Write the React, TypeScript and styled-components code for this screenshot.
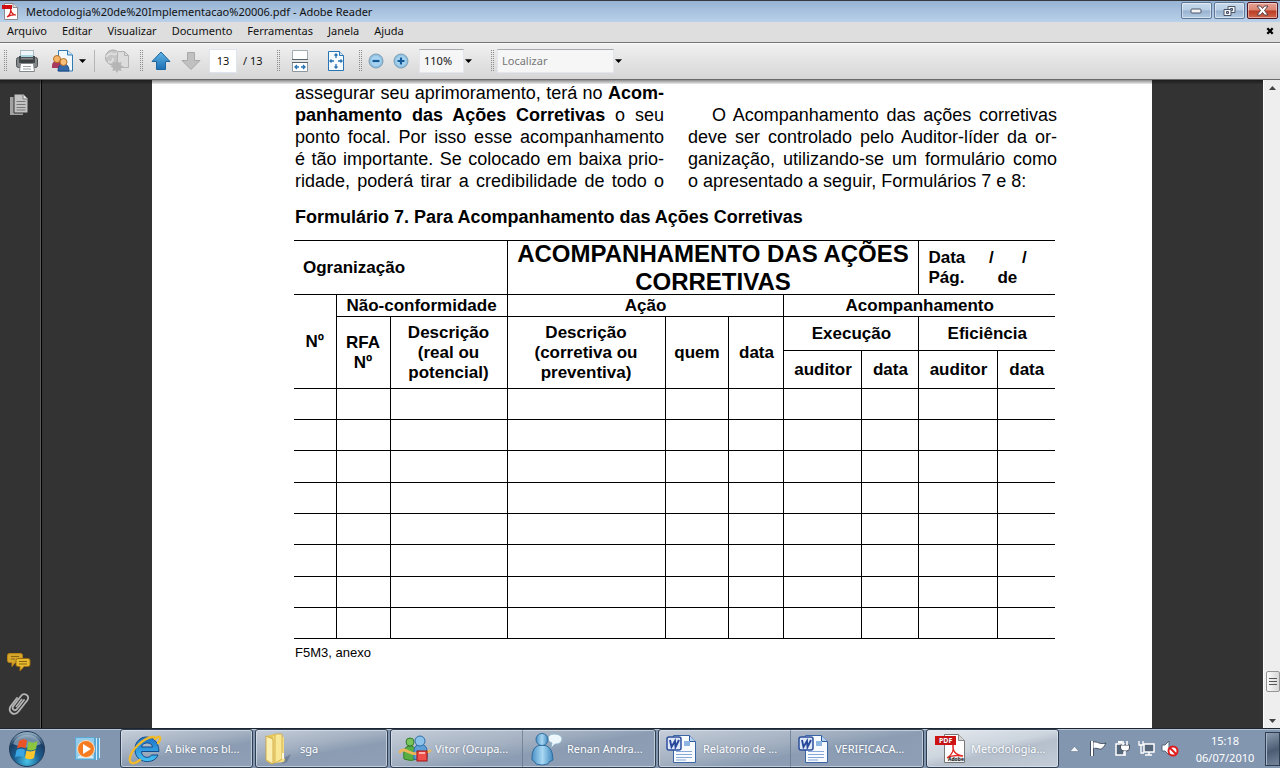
import React from 'react';
import styled, { createGlobalStyle } from 'styled-components';

const uiFont = '"Noto Sans", "Open Sans", sans-serif';
const docFont = '"Liberation Sans", Arial, sans-serif';

const GlobalStyle = createGlobalStyle`
  *, *::before, *::after { box-sizing: border-box; }
  body { margin: 0; font-family: ${uiFont}; font-size: 11px; color: #111; }
  button, input { font: inherit; color: inherit; }
  button { padding: 0; border: 0; background: none; }
  svg { display: block; flex: none; }
`;

const Desktop = styled.div`
  display: flex;
  flex-direction: column;
  height: 100vh;
  overflow: hidden;
`;

/* ---------- window frame ---------- */

const TitleBar = styled.header`
  display: flex;
  align-items: center;
  height: 22px;
  padding: 0 2px;
  border-top: 1px solid #38393f;
  background: linear-gradient(#97b3d3, #b9d1ea);
`;

const WindowTitle = styled.h1`
  flex: 1;
  margin: 0 0 0 8px;
  font-size: 11px;
  font-weight: 400;
  line-height: 20px;
  white-space: nowrap;
`;

const CaptionButtons = styled.div`
  display: flex;
  gap: 2px;
  align-self: flex-start;
  padding-top: 1px;
`;

const CaptionButton = styled.button<{ $danger?: boolean }>`
  display: grid;
  place-items: center;
  width: 31px;
  height: 17px;
  border: 1px solid ${p => (p.$danger ? '#4f1524' : '#5f7696')};
  border-radius: 2px;
  background: ${p =>
    p.$danger
      ? 'linear-gradient(#e6a193, #d98472 48%, #b93a22 52%, #d0664c)'
      : 'linear-gradient(#c8daec, #b7cde4 48%, #97b1cf 52%, #b4cce4)'};
  box-shadow: inset 0 0 0 1px rgba(255, 255, 255, 0.45);
`;

const MenuBar = styled.nav`
  display: flex;
  align-items: center;
  gap: 15px;
  height: 20px;
  padding: 0 6px 2px 7px;
  background: #dedede;
`;

const MenuItem = styled.button`
  line-height: 16px;
`;

const CloseDocument = styled.button`
  margin-left: auto;
`;

/* ---------- toolbar ---------- */

const Toolbar = styled.div`
  display: flex;
  align-items: center;
  height: 38px;
  padding-left: 3px;
  border-top: 1px solid #757575;
  border-bottom: 1px solid #6a6a6a;
  background: linear-gradient(#f1f1f1, #d6d6d6);
  box-shadow: inset 0 1px #fafafa;
`;

const Grip = styled.span<{ $before?: number }>`
  width: 4px;
  height: 22px;
  margin-left: ${p => p.$before ?? 0}px;
  background: conic-gradient(#8c8c8c 25%, transparent 0) 0 0 / 2px 2px;
`;

const ToolButton = styled.button<{ $width: number }>`
  display: grid;
  place-items: center;
  width: ${p => p.$width}px;
  height: 28px;
`;

const Caret = styled.button<{ $before?: number }>`
  width: 7px;
  height: 5px;
  margin-left: ${p => p.$before ?? 0}px;
  background: #000;
  clip-path: polygon(0 15%, 100% 15%, 50% 90%);
`;

const Divider = styled.span`
  width: 1px;
  height: 22px;
  margin: 0 9px 0 8px;
  background: #b5b5b5;
`;

const Field = styled.input<{ $width: number; $before: number }>`
  width: ${p => p.$width}px;
  height: 24px;
  margin-left: ${p => p.$before}px;
  padding: 0 4px 1px;
  border: 1px solid #e3e6ec;
  border-top-color: #a5a9ae;
  background: #f6f6f6;
  outline: 0;
  &::placeholder { color: #777; opacity: 1; }
`;

const PageField = styled(Field)`
  padding: 0 0 2px;
  border-color: #dfe4ee;
  background: #fff;
  text-align: center;
`;

const PageCount = styled.span`
  width: 25px;
  margin-left: 6px;
  padding-bottom: 2px;
  white-space: nowrap;
`;

/* ---------- reader area ---------- */

const Reader = styled.main`
  position: relative;
  display: flex;
  flex: 1;
  min-height: 0;
  background: #333;
  &::before {
    content: '';
    position: absolute;
    inset: 0 17px auto 0;
    height: 4px;
    background: linear-gradient(rgba(0, 0, 0, 0.45), rgba(0, 0, 0, 0.08));
  }
`;

const SidePanel = styled.aside`
  display: flex;
  flex-direction: column;
  align-items: center;
  gap: 20px;
  width: 42px;
  padding: 13px 4px 12px 0;
  border-right: 1px solid #000;
  box-shadow: inset -1px 0 #5a5a5a;
`;

const SideButton = styled.button<{ $push?: boolean }>`
  margin-top: ${p => (p.$push ? 'auto' : '0')};
`;

const Viewport = styled.div`
  display: flex;
  flex: 1;
  justify-content: center;
  min-width: 0;
  padding-right: 1px;
`;

const Page = styled.article`
  flex: 0 1 1000px;
  padding: 2px 95px 0 142px;
  overflow: hidden;
  background: #fff;
  color: #000;
  font-family: ${docFont};
`;

const Columns = styled.div`
  display: grid;
  grid-template-columns: 1fr 1fr;
  gap: 24px;
  padding-left: 1px;
`;

const Paragraph = styled.p<{ $skipLine?: boolean }>`
  margin: ${p => (p.$skipLine ? '22px' : '0')} 0 0;
  font-size: 18px;
  line-height: 22px;
`;

const Line = styled.span<{ $indent?: boolean; $last?: boolean }>`
  display: block;
  padding-left: ${p => (p.$indent ? '24px' : '0')};
  text-align: justify;
  text-align-last: ${p => (p.$last ? 'left' : 'justify')};
  white-space: nowrap;
`;

const FormHeading = styled.h2`
  margin: 14px 0 12px 1px;
  font-size: 18px;
  line-height: 22px;
`;

const FormTable = styled.table`
  width: calc(100% - 2px);
  border-collapse: collapse;
  table-layout: fixed;
  font-size: 17px;
  font-weight: 700;
  line-height: 20px;
  tr > * { border: 1px solid #000; padding: 0; }
  tr > :first-child:not([data-inner]) { border-left: 0; }
  tr > [data-edge] { border-right: 0; }
  tbody td { height: 31px; }
  tbody tr:nth-child(3n) td { height: 32px; }
`;

const HeadCell = styled.th<{ $height?: number }>`
  height: ${p => (p.$height ? `${p.$height}px` : 'auto')};
`;

const LeftCell = styled(HeadCell)`
  && { padding-left: 9px; }
  text-align: left;
  white-space: pre;
`;

const FormTitle = styled.div`
  margin: -1px 0 -2px;
  font-size: 24px;
  line-height: 28px;
`;

const Footnote = styled.p`
  margin: 6px 0 0 1px;
  font-size: 13px;
  line-height: 16px;
`;

/* ---------- scroll bar ---------- */

const ScrollBar = styled.div`
  display: flex;
  flex-direction: column;
  align-items: center;
  width: 17px;
  padding: 6px 0 5px 1px;
  border-left: 1px solid #fff;
  background: #eee;
`;

const ScrollArrow = styled.button<{ $down?: boolean }>`
  width: 7px;
  height: 4px;
  background: #444;
  clip-path: ${p => (p.$down ? 'polygon(0 0, 100% 0, 50% 100%)' : 'polygon(50% 0, 100% 100%, 0 100%)')};
`;

const ScrollThumb = styled.button`
  display: grid;
  place-items: center;
  width: 14px;
  height: 21px;
  margin: auto 0 27px;
  border: 1px solid #959595;
  border-radius: 2px;
  background: linear-gradient(90deg, #fafafa, #d8d8d8);
`;

/* ---------- task bar ---------- */

const TaskBar = styled.footer`
  display: flex;
  align-items: center;
  height: 40px;
  border-top: 1px solid #1c2530;
  background: #8296b0;
  box-shadow: inset 0 1px #b6c3d3;
  color: #fff;
`;

const StartButton = styled.button`
  margin: 0 29px 0 8px;
`;

const PlayerButton = styled.button`
  width: 30px;
  margin-right: 15px;
`;

const TaskList = styled.div`
  display: flex;
  gap: 2px;
  align-self: stretch;
`;

const TaskGroup = styled.div<{ $active?: boolean }>`
  display: flex;
  border: 1px solid #2f3d50;
  border-radius: 3px;
  background: ${p =>
    p.$active
      ? 'linear-gradient(168deg, #e6eaef 0, #ccd4dd 45%, #b6c0cd 58%, #c3ccd8)'
      : 'linear-gradient(170deg, #c6ced9 0, #a3b0c1 40%, #8c9db3 58%, #8fa0b6)'};
  box-shadow: inset 0 0 0 1px rgba(225, 233, 243, 0.6);
`;

const TaskButton = styled.button`
  display: grid;
  grid-template-columns: 35px 1fr;
  align-items: center;
  gap: 2px;
  width: 131px;
  padding: 0 6px 0 7px;
  text-align: left;
  white-space: nowrap;
  text-shadow: 0 0 2px rgba(50, 65, 90, 0.5);
  & + & {
    width: 133px;
    border-left: 1px solid rgba(90, 108, 132, 0.6);
  }
`;

const Tray = styled.div`
  display: flex;
  align-items: center;
  gap: 6px;
  margin-left: auto;
`;

const TrayButton = styled.button<{ $narrow?: boolean }>`
  display: grid;
  place-items: center;
  width: ${p => (p.$narrow ? '10px' : '18px')};
  margin-right: ${p => (p.$narrow ? '4px' : '0')};
`;

const Clock = styled.time`
  width: 68px;
  margin-left: 6px;
  line-height: 17px;
  text-align: center;
`;

const ShowDesktop = styled.button`
  align-self: stretch;
  width: 15px;
  border: 1px solid #2f3d50;
  background: linear-gradient(160deg, #8b9bb0, #4c5c72 55%, #76879d);
  box-shadow: inset 1px 0 #a5b4c6;
`;

/* ---------- icons ---------- */

const PdfAppIcon = () => (
  <svg width="16" height="17" viewBox="0 0 16 17">
    <path d="M2.500 .5h8.500l4.500 4v12h-13z" fill="#fff" stroke="#8b8b8b" />
    <path d="M11 .5v4h4.500" fill="#ddd" stroke="#8b8b8b" />
    <rect x="0" y="2" width="10" height="4" fill="#d10f12" />
    <path d="M5 14c3-2 4-5 3.600-8 .2 4 3 6 5.400 6-3-.6-6 0-9 2z" fill="none" stroke="#d8201c" strokeWidth="1.200" />
  </svg>
);

const MinimizeIcon = () => (
  <svg width="13" height="7"><rect x="1" y="2" width="10" height="4" rx="1" fill="#f4f4f4" stroke="#4a5468" /></svg>
);
const RestoreIcon = () => (
  <svg width="13" height="12" viewBox="0 0 13 12">
    <path d="M5 1.500h7v6H5z" fill="#f4f4f4" stroke="#4a5468" />
    <path d="M7.500 3.500h2v2h-2z" fill="#9db4cf" stroke="#4a5468" />
    <path d="M1 4.500h7v6H1z" fill="#f4f4f4" stroke="#4a5468" />
    <path d="M3.500 6.500h2v2h-2z" fill="#9db4cf" stroke="#4a5468" />
  </svg>
);
const CloseIcon = () => (
  <svg width="13" height="11" viewBox="0 0 13 11">
    <path d="M1 1h3.500l2 2.500 2-2.500H12L8.500 5.500 12 10H8.500l-2-2.500-2 2.500H1l3.500-4.500z" fill="#fff" stroke="#5a4048" />
  </svg>
);
const SmallCross = () => (
  <svg width="8" height="8" viewBox="0 0 8 8"><path d="M1.300 1.300l5.400 5.400M6.700 1.300L1.300 6.700" stroke="#000" strokeWidth="2.300" /></svg>
);

const PrinterIcon = () => (
  <svg width="22" height="24" viewBox="0 0 22 24">
    <rect x="4.500" y="1.500" width="13" height="8" fill="#eef6fa" stroke="#a9bac2" />
    <path d="M5 7h12" stroke="#a9d5e0" strokeWidth="2" />
    <rect x=".5" y="8.500" width="21" height="10" rx="2" fill="#85898c" stroke="#4d5154" />
    <path d="M4 7v6h14V7" fill="none" stroke="#45494c" strokeWidth="2" />
    <path d="M5 12h12" stroke="#3a3e41" strokeWidth="3" />
    <path d="M4.500 14.500h13l1 8h-15z" fill="#fff" stroke="#84898c" />
    <path d="M7 17.500h8M7 20h8" stroke="#9aa3a8" />
  </svg>
);

const PeopleIcon = () => (
  <svg width="24" height="24" viewBox="0 0 24 24">
    <path d="M7.500 1.500h9l5 4.500v16h-14z" fill="#f1f8fd" stroke="#2f7ab3" />
    <path d="M16.500 1.500V6h5" fill="#cfe4f3" stroke="#2f7ab3" />
    <path d="M1 17q0-5 5-5t5 5v2H1z" fill="#a83a5f" />
    <circle cx="6" cy="10" r="3.500" fill="#f4b56a" stroke="#b86f22" />
    <path d="M7 22q0-7 5.500-7t5.500 7z" fill="#3569a8" stroke="#214d84" />
    <circle cx="12.500" cy="13" r="3.500" fill="#f8c07a" stroke="#b86f22" />
  </svg>
);

const GlobeIcon = () => (
  <svg width="26" height="24" viewBox="0 0 26 24">
    <circle cx="9" cy="8.500" r="7.500" fill="#c6c6c6" stroke="#a9a9a9" />
    <path d="M2 8q4-5 7-3t5-3M4 13q5 1 5-4" fill="none" stroke="#dedede" strokeWidth="2" />
    <path d="M13.500 2.500h7l4 4v12h-11z" fill="#dcdcdc" stroke="#b3b3b3" />
    <path d="M20.500 2.500v4h4" fill="none" stroke="#b3b3b3" />
    <path d="M13 11l1.600 2.700 3-.8-.8 3 2.700 1.600-2.700 1.600.8 3-3-.8L13 24l-1.600-2.700-3 .8.800-3-2.700-1.600 2.700-1.600-.8-3 3 .8z" fill="#b5b5b5" />
  </svg>
);

const ArrowIcon = ({ down }: { down?: boolean }) => (
  <svg width="20" height="20" viewBox="0 0 20 20">
    <defs>
      <linearGradient id="arrowBlue" x2="0" y2="1"><stop stopColor="#62b4e6" /><stop offset="1" stopColor="#1c70b4" /></linearGradient>
    </defs>
    {down
      ? <path d="M10 18.500L1 9.500h5.500v-8h7v8H19z" fill="#c0c0c0" stroke="#a9a9a9" />
      : <path d="M10 1L1 10.500h4.500v8h9v-8H19z" fill="url(#arrowBlue)" stroke="#1d659f" />}
  </svg>
);

const FitWidthIcon = () => (
  <svg width="18" height="22" viewBox="0 0 18 22">
    <path d="M1.500 .5h15v9h-15z" fill="#fff" stroke="#a3adb4" />
    <path d="M1.500 12.500h15v9h-15z" fill="#fff" stroke="#8c979f" />
    <path d="M1 9.500h16M1 12.500h16" stroke="#57646d" />
    <path d="M4 17h4M10 17h4M6 15l-2 2 2 2M12 15l2 2-2 2" fill="none" stroke="#2775b4" strokeWidth="1.300" />
  </svg>
);

const FitPageIcon = () => (
  <svg width="18" height="22" viewBox="0 0 18 22">
    <path d="M1.500 1.500h11l4 4v15h-15z" fill="#f5fafd" stroke="#2775b4" />
    <path d="M12.500 1.500v4h4" fill="#d3e6f3" stroke="#2775b4" />
    <path d="M9 4v4M9 14v4M3 11h4M11 11h4M7.500 5.500L9 4l1.500 1.500M7.500 16.500L9 18l1.500-1.500M4.500 9.500L3 11l1.500 1.500M13.500 9.500L15 11l-1.500 1.500" fill="none" stroke="#2775b4" strokeWidth="1.300" />
  </svg>
);

const ZoomIcon = ({ plus }: { plus?: boolean }) => (
  <svg width="16" height="16" viewBox="0 0 16 16">
    <circle cx="8" cy="8" r="7" fill="#8fc3e6" stroke="#7f9cb0" />
    <circle cx="8" cy="8" r="5" fill="#a9d4ef" />
    <path d={plus ? 'M4.500 8h7M8 4.500v7' : 'M4.500 8h7'} stroke="#155a99" strokeWidth="2.200" />
  </svg>
);

const PagesIcon = () => (
  <svg width="20" height="24" viewBox="0 0 20 24">
    <path d="M1 4h13v18H1z" fill="#a2a2a2" />
    <path d="M5 1h9l5 5v14H5z" fill="#c3c3c3" stroke="#333" />
    <path d="M14 1v5h5" fill="#e6e6e6" stroke="#777" />
    <path d="M7.500 8.500h9M7.500 11.500h9M7.500 14.500h9M7.500 17h9" stroke="#777" />
  </svg>
);

const CommentsIcon = () => (
  <svg width="24" height="19" viewBox="0 0 24 19">
    <path d="M2.500.5h11q2 0 2 2v5q0 2-2 2H8l-3 4V9.500H2.500q-2 0-2-2v-5q0-2 2-2z" fill="#d4a72c" stroke="#b98413" />
    <path d="M11 5.500h10q2 0 2 2v4q0 2-2 2h-4l-4 4.500v-4.500h-2q-2 0-2-2v-4q0-2 2-2z" fill="#e7bb31" stroke="#9c6d0c" />
    <path d="M4 3.500h8M4 6h4M12 8.500h8M12 11h8" stroke="#8a6410" />
  </svg>
);

const ClipIcon = () => (
  <svg width="22" height="24" viewBox="0 0 22 24">
    <path d="M16 8l-7 9c-2 2.500-5.500.5-4-2.500L13 4c3-4 9-.5 6.500 4l-9 11.500c-4 5-11 1-8-5L9 6" fill="none" stroke="#b4b4b4" strokeWidth="1.800" strokeLinecap="round" />
    <path d="M8 15l6-8" stroke="#b4b4b4" strokeWidth="1.500" />
  </svg>
);

const StartOrb = () => (
  <svg width="38" height="38" viewBox="0 0 38 38">
    <defs>
      <radialGradient id="orb" cx=".5" cy=".85" r=".8">
        <stop stopColor="#49c4e8" /><stop offset=".45" stopColor="#1b5f92" /><stop offset=".8" stopColor="#1b3d63" /><stop offset="1" stopColor="#8fa9bf" />
      </radialGradient>
    </defs>
    <circle cx="19" cy="19" r="17.500" fill="url(#orb)" stroke="#203b57" />
    <path d="M5 14a15 15 0 0 1 28 0q-14 7-28 0z" fill="#c8dbe8" opacity=".5" />
    <path d="M11 11q4-3 8-.5l-1.500 8q-4-2.500-8.500 0z" fill="#ea5426" />
    <path d="M20.500 11.500q4 2.500 9-.5l-1.500 8q-4 2.500-9 .5z" fill="#8cc63f" />
    <path d="M8.500 20q4.500-2.500 8.500 0l-1.500 7.500q-4-2.500-8.500 0z" fill="#39a5e3" />
    <path d="M18.500 20.500q4.500 2 9-.5l-1.500 8q-4.500 2.500-9 0z" fill="#fcc62d" />
  </svg>
);

const PlayerIcon = () => (
  <svg width="30" height="26" viewBox="0 0 30 26">
    <path d="M11 2h14v20l-3 2H11z" fill="#5ba7d6" />
    <path d="M21.500 2v22M24.500 2v20" stroke="#d0edfb" />
    <rect x=".5" y="1.500" width="19" height="22" fill="#92cdeb" stroke="#5fa7d0" />
    <path d="M3 21h15" stroke="#d3effc" strokeWidth="2" />
    <circle cx="11" cy="13" r="8.500" fill="#f47b20" stroke="#fbe0c4" />
    <path d="M8 8l8 5-8 5z" fill="#fff" />
  </svg>
);

const ExplorerIcon = () => (
  <svg width="34" height="32" viewBox="0 0 34 32">
    <defs><linearGradient id="ie" x2="0" y2="1"><stop stopColor="#1b70c8" /><stop offset="1" stopColor="#46c3f4" /></linearGradient></defs>
    <path d="M31 18.500H13.500c0 6.500 8 7.500 10 3.500h6.500c-3 9.500-23 9.500-23-5.500 0-17 24-17 24 2zM13.500 14h11c-.5-5.500-10-5.500-11 0z" fill="url(#ie)" stroke="#124c8c" />
    <path d="M27 6c5-5 7-1 3 4M26 4C17 3 0 19 2 28c1 4 6 2 10-1" fill="none" stroke="#f0b92c" strokeWidth="2.400" strokeLinecap="round" />
  </svg>
);

const FolderIcon = () => (
  <svg width="30" height="32" viewBox="0 0 30 32">
    <path d="M21 25l7-4-4 8-5 2z" fill="#556479" opacity=".5" />
    <path d="M3 3l8-2 9 3v24l-12 3-5-3z" fill="#e8c758" />
    <path d="M10 3l11 1v18q-2 2 1 4l-1 3-11 1z" fill="#f3dd83" />
    <path d="M3 3l7 3v25l-7-4z" fill="#faeeb0" stroke="#c9a034" strokeWidth=".8" />
    <path d="M12 1h7v25l-7 4z" fill="#f8e795" stroke="#cfa93f" strokeWidth=".8" />
    <path d="M20 20v6" stroke="#fff8d8" strokeWidth="2" />
  </svg>
);

const MessengerIcon = () => (
  <svg width="34" height="28" viewBox="0 0 34 28">
    <path d="M6 24q-2-13 6-13t7 13q-6 3-13 0z" fill="#58ad43" stroke="#357f2a" />
    <circle cx="12" cy="7" r="4" fill="#79c45c" stroke="#357f2a" />
    <path d="M16 24q-2-15 6.500-15t6.500 15q-6 3-13 0z" fill="#5d9fd6" stroke="#2f6ea8" />
    <circle cx="22" cy="6" r="5" fill="#8cc2ea" stroke="#2f6ea8" />
    <path d="M2 17q2-4 9 0t21-1" fill="none" stroke="#eeb65a" strokeWidth="2.800" strokeLinecap="round" />
    <rect x="19" y="16" width="10" height="10" fill="#ef4f4b" stroke="#a31313" />
    <path d="M21 18h6" stroke="#ffb3ae" strokeWidth="2" />
  </svg>
);

const ContactIcon = () => (
  <svg width="34" height="34" viewBox="0 0 34 34">
    <defs><linearGradient id="body"><stop stopColor="#4d92c6" /><stop offset=".5" stopColor="#a8d8f3" /><stop offset="1" stopColor="#3f86bd" /></linearGradient></defs>
    <path d="M24 2c12 0 9 11 1 10l-4 4 1-5c-6-2-5-9 2-9z" fill="#eef7fc" stroke="#8fb6cc" />
    <path d="M2 28Q1 13 12 13t11 15l-4 2-1 2q-6 2-12 0l-1-2z" fill="url(#body)" stroke="#2f6ea1" />
    <circle cx="12" cy="7.500" r="6" fill="url(#body)" stroke="#2f6ea1" />
  </svg>
);

const WordIcon = () => (
  <svg width="32" height="30" viewBox="0 0 32 30">
    <path d="M7.500 1.500h16l6 6v21h-22z" fill="#f7faff" stroke="#3a66a8" />
    <path d="M23.500 1.500v6h6" fill="#b9d2ef" stroke="#2d5c9d" />
    <path d="M18 7h6v5h-6z" fill="#8fb5e2" />
    <path d="M10 17.500h16M10 20.500h16M10 23.500h16M10 26h10" stroke="#86a8d6" />
    <rect x="1" y="3" width="14" height="13" rx="2" fill="#dfe8f8" stroke="#2d4f9c" strokeWidth="1.500" />
    <path d="M4 6l1.500 7L9 7l.5 6L13 6" fill="none" stroke="#27479a" strokeWidth="1.900" />
  </svg>
);

const PdfBadge = styled.text`
  fill: #fff;
  font: 700 7px ${uiFont};
`;
const AdobeMark = styled.text`
  fill: #222;
  font: 700 5px ${uiFont};
`;
const PdfTaskIcon = () => (
  <svg width="33" height="31" viewBox="0 0 33 31">
    <path d="M10.500 1.500h14l6 6v22h-20z" fill="#fff" stroke="#777" />
    <path d="M24.500 1.500v6h6" fill="#d5d5d5" stroke="#888" />
    <path d="M13 25c6-4 7-8 6-14-1 8 3 11 10 12-6-1-11-1-16 2z" fill="none" stroke="#e32a25" strokeWidth="1.300" />
    <rect x="1" y="3" width="21" height="9" fill="#cf1214" />
    <PdfBadge x="5" y="10">PDF</PdfBadge>
    <AdobeMark x="14" y="28">Adobe</AdobeMark>
  </svg>
);

const trayStroke = { fill: 'none', stroke: '#fff', strokeWidth: 1.3 };
const UpTriangle = () => <svg width="9" height="6"><path d="M4.500 .5L9 5.500H0z" fill="#f5f8fb" stroke="#44566d" strokeWidth=".4" /></svg>;
const FlagIcon = () => (
  <svg width="17" height="17" viewBox="0 0 17 17">
    <path d="M2 1v15" stroke="#44505f" strokeWidth="4" />
    <path d="M3 2c5-1 6 3 13 1-2 4-4 7-7 6S5 8 3 9z" fill="#fff" stroke="#44505f" />
    <path d="M2 1v15" stroke="#fff" strokeWidth="2" />
  </svg>
);
const PowerIcon = () => (
  <svg width="17" height="17" viewBox="0 0 17 17">
    <rect x="2" y="4" width="8" height="11" fill="#56667b" stroke="#fff" strokeWidth="1.500" />
    <path d="M4 2h4" stroke="#fff" strokeWidth="2" />
    <path d="M6.500 5h9v3q0 3-3 3H10q-3 0-3.500-3z" fill="#fff" stroke="#44505f" />
    <path d="M9 1v4M13 1v4M11 11v5" stroke="#fff" strokeWidth="1.600" />
  </svg>
);
const NetworkIcon = () => (
  <svg width="17" height="17" viewBox="0 0 17 17">
    <rect x="6" y="4" width="10" height="8" fill="#56667b" stroke="#fff" strokeWidth="1.500" />
    <path d="M7 15h7M11 12v3" stroke="#fff" strokeWidth="1.600" />
    <path d="M1 1v4h4V1M3 5v8h3" {...trayStroke} />
  </svg>
);
const MutedIcon = () => (
  <svg width="18" height="17" viewBox="0 0 18 17">
    <path d="M1 5h3l4-4v14l-4-4H1z" fill="#fff" stroke="#56667b" />
    <circle cx="12" cy="11" r="4.500" fill="#fff" stroke="#e01b1b" strokeWidth="2" />
    <path d="M9 8l6 6" stroke="#e01b1b" strokeWidth="2" />
  </svg>
);

/* ---------- data ---------- */

const menus = ['Arquivo', 'Editar', 'Visualizar', 'Documento', 'Ferramentas', 'Janela', 'Ajuda'];
const columnWidths = [42, 54, 117, 158, 64, 55, 78, 57, 79, 57];
const tableWidth = 761;

const taskGroups: { active?: boolean; items: { label: string; icon: React.ReactNode }[] }[] = [
  { items: [{ label: 'A bike nos bl...', icon: <ExplorerIcon /> }] },
  { items: [{ label: 'sga', icon: <FolderIcon /> }] },
  { items: [{ label: 'Vitor (Ocupa...', icon: <MessengerIcon /> }, { label: 'Renan Andra...', icon: <ContactIcon /> }] },
  { items: [{ label: 'Relatorio de ...', icon: <WordIcon /> }, { label: 'VERIFICACA...', icon: <WordIcon /> }] },
  { active: true, items: [{ label: 'Metodologia...', icon: <PdfTaskIcon /> }] },
];

const CorrectiveActionsForm = () => (
  <FormTable>
    <colgroup>
      {columnWidths.map((w, i) => <col key={i} style={{ width: `${(w / tableWidth) * 100}%` }} />)}
    </colgroup>
    <thead>
      <tr>
        <LeftCell colSpan={3} $height={54}>Ogranização</LeftCell>
        <HeadCell colSpan={5}><FormTitle>ACOMPANHAMENTO DAS AÇÕES<br />CORRETIVAS</FormTitle></HeadCell>
        <LeftCell colSpan={2} data-edge>{'Data     /      /\nPág.       de'}</LeftCell>
      </tr>
      <tr>
        <HeadCell rowSpan={3} $height={22}>Nº</HeadCell>
        <HeadCell colSpan={2} $height={22}>Não-conformidade</HeadCell>
        <HeadCell colSpan={3}>Ação</HeadCell>
        <HeadCell colSpan={4} data-edge>Acompanhamento</HeadCell>
      </tr>
      <tr>
        <HeadCell rowSpan={2} data-inner>RFA<br />Nº</HeadCell>
        <HeadCell rowSpan={2}>Descrição<br />(real ou<br />potencial)</HeadCell>
        <HeadCell rowSpan={2}>Descrição<br />(corretiva ou<br />preventiva)</HeadCell>
        <HeadCell rowSpan={2}>quem</HeadCell>
        <HeadCell rowSpan={2}>data</HeadCell>
        <HeadCell colSpan={2} $height={34}>Execução</HeadCell>
        <HeadCell colSpan={2} data-edge>Eficiência</HeadCell>
      </tr>
      <tr>
        <HeadCell data-inner $height={38}>auditor</HeadCell>
        <HeadCell>data</HeadCell>
        <HeadCell>auditor</HeadCell>
        <HeadCell data-edge>data</HeadCell>
      </tr>
    </thead>
    <tbody>
      {Array.from({ length: 8 }, (_, row) => (
        <tr key={row}>
          {columnWidths.map((_, i) => <td key={i} data-edge={i === columnWidths.length - 1 ? true : undefined} />)}
        </tr>
      ))}
    </tbody>
  </FormTable>
);

export default function App() {
  return (
    <Desktop>
      <GlobalStyle />
      <TitleBar>
        <PdfAppIcon />
        <WindowTitle>Metodologia%20de%20Implementacao%20006.pdf - Adobe Reader</WindowTitle>
        <CaptionButtons>
          <CaptionButton aria-label="Minimizar"><MinimizeIcon /></CaptionButton>
          <CaptionButton aria-label="Restaurar"><RestoreIcon /></CaptionButton>
          <CaptionButton aria-label="Fechar" $danger><CloseIcon /></CaptionButton>
        </CaptionButtons>
      </TitleBar>
      <MenuBar>
        {menus.map(m => <MenuItem key={m}>{m}</MenuItem>)}
        <CloseDocument aria-label="Fechar documento"><SmallCross /></CloseDocument>
      </MenuBar>
      <Toolbar role="toolbar">
        <Grip />
        <ToolButton $width={40} aria-label="Imprimir"><PrinterIcon /></ToolButton>
        <ToolButton $width={32} aria-label="Colaborar"><PeopleIcon /></ToolButton>
        <Caret aria-label="Opções de colaboração" />
        <Divider />
        <ToolButton $width={26} aria-label="Publicar"><GlobeIcon /></ToolButton>
        <Grip $before={9} />
        <ToolButton $width={36} aria-label="Página anterior"><ArrowIcon /></ToolButton>
        <ToolButton $width={24} aria-label="Próxima página"><ArrowIcon down /></ToolButton>
        <PageField $width={28} $before={6} aria-label="Página" defaultValue="13" />
        <PageCount>/ 13</PageCount>
        <Grip $before={8} />
        <ToolButton $width={40} aria-label="Ajustar largura"><FitWidthIcon /></ToolButton>
        <ToolButton $width={32} aria-label="Ajustar página"><FitPageIcon /></ToolButton>
        <Grip $before={6} />
        <ToolButton $width={28} aria-label="Reduzir"><ZoomIcon /></ToolButton>
        <ToolButton $width={22} aria-label="Ampliar"><ZoomIcon plus /></ToolButton>
        <Field $width={45} $before={7} aria-label="Zoom" defaultValue="110%" />
        <Caret $before={1} aria-label="Opções de zoom" />
        <Grip $before={18} />
        <Field $width={117} $before={3} aria-label="Localizar" placeholder="Localizar" />
        <Caret $before={1} aria-label="Opções de busca" />
      </Toolbar>

      <Reader>
        <SidePanel>
          <SideButton aria-label="Páginas"><PagesIcon /></SideButton>
          <SideButton aria-label="Comentários" $push><CommentsIcon /></SideButton>
          <SideButton aria-label="Anexos"><ClipIcon /></SideButton>
        </SidePanel>
        <Viewport>
          <Page>
            <Columns>
              <Paragraph>
                <Line>assegurar seu aprimoramento, terá no <b>Acom-</b></Line>
                <Line><b>panhamento das Ações Corretivas</b> o seu</Line>
                <Line>ponto focal. Por isso esse acompanhamento</Line>
                <Line>é tão importante. Se colocado em baixa prio-</Line>
                <Line>ridade, poderá tirar a credibilidade de todo o</Line>
              </Paragraph>
              <Paragraph $skipLine>
                <Line $indent>O Acompanhamento das ações corretivas</Line>
                <Line>deve ser controlado pelo Auditor-líder da or-</Line>
                <Line>ganização, utilizando-se um formulário como</Line>
                <Line $last>o apresentado a seguir, Formulários 7 e 8:</Line>
              </Paragraph>
            </Columns>
            <FormHeading>Formulário 7. Para Acompanhamento das Ações Corretivas</FormHeading>
            <CorrectiveActionsForm />
            <Footnote>F5M3, anexo</Footnote>
          </Page>
        </Viewport>
        <ScrollBar>
          <ScrollArrow aria-label="Rolar para cima" />
          <ScrollThumb aria-label="Posição">
            <svg width="8" height="9"><path d="M0 1.500h8M0 4.500h8M0 7.500h8" stroke="#555" /></svg>
          </ScrollThumb>
          <ScrollArrow $down aria-label="Rolar para baixo" />
        </ScrollBar>
      </Reader>

      <TaskBar>
        <StartButton aria-label="Iniciar"><StartOrb /></StartButton>
        <PlayerButton aria-label="Windows Media Player"><PlayerIcon /></PlayerButton>
        <TaskList>
          {taskGroups.map((group, g) => (
            <TaskGroup key={g} $active={group.active}>
              {group.items.map(item => (
                <TaskButton key={item.label}>{item.icon}<span>{item.label}</span></TaskButton>
              ))}
            </TaskGroup>
          ))}
        </TaskList>
        <Tray>
          <TrayButton $narrow aria-label="Mostrar ícones ocultos"><UpTriangle /></TrayButton>
          <TrayButton aria-label="Central de Ações"><FlagIcon /></TrayButton>
          <TrayButton aria-label="Energia"><PowerIcon /></TrayButton>
          <TrayButton aria-label="Rede"><NetworkIcon /></TrayButton>
          <TrayButton aria-label="Volume"><MutedIcon /></TrayButton>
          <Clock>15:18<br />06/07/2010</Clock>
          <ShowDesktop aria-label="Mostrar área de trabalho" />
        </Tray>
      </TaskBar>
    </Desktop>
  );
}
